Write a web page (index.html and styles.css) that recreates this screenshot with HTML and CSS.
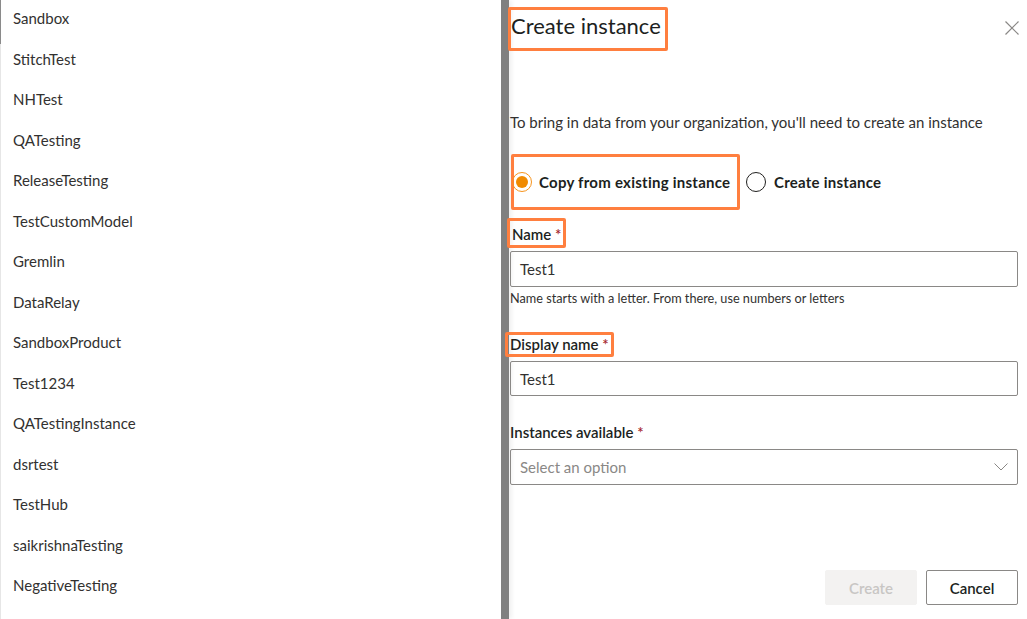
FILE: index.html
```html
<!DOCTYPE html>
<html>
<head>
<meta charset="utf-8">
<link rel="stylesheet" href="styles.css">
</head>
<body>
<div class="app">
  <nav class="list">
    <div class="item active">Sandbox</div>
    <div class="item">StitchTest</div>
    <div class="item">NHTest</div>
    <div class="item">QATesting</div>
    <div class="item">ReleaseTesting</div>
    <div class="item">TestCustomModel</div>
    <div class="item">Gremlin</div>
    <div class="item">DataRelay</div>
    <div class="item">SandboxProduct</div>
    <div class="item">Test1234</div>
    <div class="item">QATestingInstance</div>
    <div class="item">dsrtest</div>
    <div class="item">TestHub</div>
    <div class="item">saikrishnaTesting</div>
    <div class="item">NegativeTesting</div>
  </nav>
  <div class="splitter"></div>
  <section class="panel">
    <header class="panel-head">
      <h1 class="title hl">Create instance</h1>
      <button class="close" aria-label="Close">
        <svg width="14" height="14" viewBox="0 0 14 14"><path d="M0.5 0.5 L13.5 13.5 M13.5 0.5 L0.5 13.5" stroke="#8a8886" stroke-width="1.2" fill="none"/></svg>
      </button>
    </header>
    <p class="desc">To bring in data from your organization, you'll need to create an instance</p>
    <div class="radios">
      <label class="radio hl hl-radio"><span class="dot on"></span>Copy from existing instance</label>
      <label class="radio"><span class="dot"></span>Create instance</label>
    </div>
    <div class="field f-name">
      <label class="lbl hl hl-lbl">Name <span class="req">*</span></label>
      <div class="input">Test1</div>
      <div class="help">Name starts with a letter. From there, use numbers or letters</div>
    </div>
    <div class="field f-display">
      <label class="lbl hl hl-lbl2">Display name <span class="req">*</span></label>
      <div class="input">Test1</div>
    </div>
    <div class="field f-inst">
      <label class="lbl">Instances available <span class="req">*</span></label>
      <div class="input select"><span class="ph">Select an option</span>
        <svg width="14" height="8" viewBox="0 0 14 8"><path d="M0.5 0.5 L7 7 L13.5 0.5" stroke="#8a8886" stroke-width="1" fill="none"/></svg>
      </div>
    </div>
    <div class="actions">
      <button class="btn disabled">Create</button>
      <button class="btn">Cancel</button>
    </div>
  </section>
</div>
</body>
</html>
```
FILE: styles.css
```css
* { box-sizing: border-box; }
html, body { margin: 0; padding: 0; }
body {
  width: 1027px;
  height: 619px;
  overflow: hidden;
  background: #fff;
  font-family: "Lato", "Open Sans", sans-serif;
  color: #323130;
}
.app { display: flex; height: 619px; }

.list {
  width: 501px;
  border-left: 1px solid #e6e6e6;
  margin-top: -1px;
}
.item {
  height: 40.5px;
  line-height: 38px;
  padding-left: 12px;
  font-size: 15px;
  color: #323130;
}
.item.active { box-shadow: inset 1px 0 0 #8a8a8a; margin-left: -1px; padding-left: 13px; height: 45px; margin-bottom: -4.5px; }

.splitter {
  width: 8px;
  background: #808080;
  box-shadow: 3px 0 4px rgba(0,0,0,0.06);
}

.panel {
  flex: 1;
  padding: 0 9px 0 1px;
  display: flex;
  flex-direction: column;
  position: relative;
}
.hl {
  border: 3px solid #ff7f3f;
  border-radius: 2px;
}
.panel-head {
  display: flex;
  justify-content: space-between;
  align-items: flex-start;
}
.title {
  margin: 7px 0 0 -2px;
  width: 160px;
  height: 44px;
  font-size: 22px;
  font-weight: 400;
  line-height: 31px;
  padding-left: 0;
  color: #201f1e;
}
.close {
  border: 0;
  background: none;
  padding: 0;
  margin: 21px -1px 0 0;
  width: 14px;
  height: 14px;
  display: flex;
}
.desc {
  margin: 61px 0 0 0;
  font-size: 15px;
  line-height: 20px;
  color: #323130;
}
.radios {
  display: flex;
  align-items: center;
  margin-top: 22px;
}
.radio {
  display: flex;
  align-items: center;
  font-size: 15px;
  font-weight: 700;
  color: #201f1e;
  height: 56px;
  letter-spacing: 0.25px;
}
.hl-radio {
  width: 229px;
  margin-left: 1px;
  padding-left: 0;
}
.dot {
  width: 20px;
  height: 20px;
  border-radius: 50%;
  border: 1px solid #201f1e;
  margin-right: 8px;
  position: relative;
}
.hl-radio .dot { margin-left: -2px; margin-right: 7px; }
.dot.on { border-color: #f7941d; }
.dot.on::after {
  content: "";
  position: absolute;
  left: 3px; top: 3px;
  width: 12px; height: 12px;
  border-radius: 50%;
  background: #f08a00;
}
.radio + .radio { margin-left: 6px; }

.field { display: flex; flex-direction: column; }
.lbl {
  font-size: 15px;
  font-weight: 600;
  color: #201f1e;
  line-height: 20px;
  align-self: flex-start;
}
.req { color: #a4262c; }
.f-name { margin-top: 8px; }
.hl-lbl { margin-left: -3px; padding: 2px 2px 2px 2px; height: 30px; line-height: 22px; }
.input {
  height: 36px;
  border: 1px solid #8a8886;
  border-radius: 2px;
  padding: 0 9px;
  font-size: 15px;
  line-height: 34px;
  color: #323130;
}
.f-name .input { margin-top: 3px; }
.help { font-size: 12.7px; color: #323130; margin-top: 3px; line-height: 16px; }
.f-display { margin-top: 26px; }
.hl-lbl2 { margin-left: -5px; padding: 0 2px; height: 25px; line-height: 18px; }
.f-display .input { margin-top: 4px; height: 35px; }
.f-inst { margin-top: 26px; }
.f-inst .lbl { line-height: 20px; }
.f-inst .input { margin-top: 7px; }
.select { display: flex; justify-content: space-between; align-items: center; }
.ph { color: #8a8886; }

.actions {
  margin-top: auto;
  margin-bottom: 14px;
  display: flex;
  justify-content: flex-end;
  gap: 9px;
}
.btn {
  width: 92px;
  height: 35px;
  border: 1px solid #8a8886;
  border-radius: 2px;
  background: #fff;
  font-family: inherit;
  font-size: 15px;
  font-weight: 600;
  color: #201f1e;
}
.btn.disabled {
  background: #f3f2f1;
  border-color: #f3f2f1;
  color: #c8c6c4;
}
```
